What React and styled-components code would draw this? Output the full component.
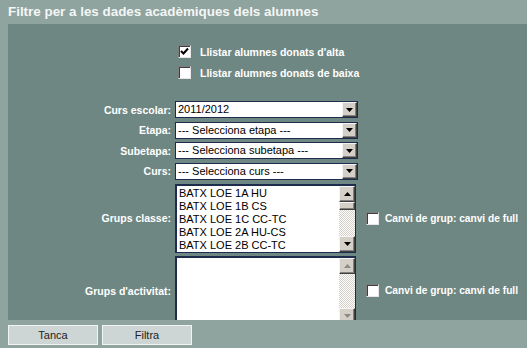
import styled, { createGlobalStyle } from 'styled-components';

const GlobalStyle = createGlobalStyle`
  body {
    margin: 0;
    background: #8fa49f;
    font-family: "Liberation Sans", Arial, sans-serif;
  }
`;

const grups = ['BATX LOE 1A HU', 'BATX LOE 1B CS', 'BATX LOE 1C CC-TC', 'BATX LOE 2A HU-CS', 'BATX LOE 2B CC-TC'];

const selects = [
  { label: 'Curs escolar:', value: '2011/2012' },
  { label: 'Etapa:', value: '--- Selecciona etapa ---' },
  { label: 'Subetapa:', value: '--- Selecciona subetapa ---' },
  { label: 'Curs:', value: '--- Selecciona curs ---' },
];

const Arrow = ({ dir = 'down', disabled }) => (
  <svg width="7" height="4" viewBox="0 0 7 4">
    <path
      d={dir === 'down' ? 'M0 0H7L3.5 4Z' : 'M0 4H7L3.5 0Z'}
      fill={disabled ? '#8a8a8a' : '#000'}
    />
  </svg>
);

const Check = ({ checked }) => (
  <Box>
    {checked && (
      <svg width="9" height="9" viewBox="0 0 9 9">
        <path d="M1 4l2.5 2.5L8 1.5" stroke="#000" strokeWidth="2" fill="none" />
      </svg>
    )}
  </Box>
);

const ListBox = ({ items = [], disabled }) => (
  <List>
    <Items>
      {items.map((i) => (
        <Item key={i}>{i}</Item>
      ))}
    </Items>
    <Scroll>
      <ScrollBtn><Arrow dir="up" disabled={disabled} /></ScrollBtn>
      {!disabled && <Thumb />}
      <Track />
      <ScrollBtn><Arrow disabled={disabled} /></ScrollBtn>
    </Scroll>
  </List>
);

export default function App() {
  return (
    <Page>
      <GlobalStyle />
      <Title>Filtre per a les dades acadèmiques dels alumnes</Title>
      <Panel>
        <Options>
          <CheckRow><Check checked /> Llistar alumnes donats d'alta</CheckRow>
          <CheckRow><Check /> Llistar alumnes donats de baixa</CheckRow>
        </Options>
        <Form>
          {selects.map((s) => (
            <Row key={s.label}>
              <Label>{s.label}</Label>
              <Select>
                <span>{s.value}</span>
                <DropBtn><Arrow /></DropBtn>
              </Select>
            </Row>
          ))}
          <Row $tall>
            <Label>Grups classe:</Label>
            <ListBox items={grups} />
            <CheckRow $side><Check /> Canvi de grup: canvi de full</CheckRow>
          </Row>
          <Row $tall>
            <Label>Grups d'activitat:</Label>
            <ListBox disabled />
            <CheckRow $side><Check /> Canvi de grup: canvi de full</CheckRow>
          </Row>
        </Form>
      </Panel>
      <Footer>
        <Button>Tanca</Button>
        <Button>Filtra</Button>
      </Footer>
    </Page>
  );
}

const Page = styled.div`
  padding-left: 8px;
  width: 519px;
`;

const Title = styled.h1`
  margin: 0;
  height: 24px;
  line-height: 24px;
  font-size: 13.4px;
  font-weight: bold;
  color: #f4f6f5;
`;

const Panel = styled.div`
  background: #6f8782;
  height: 296px;
  overflow: hidden;
`;

const Options = styled.div`
  display: flex;
  flex-direction: column;
  gap: 8px;
  padding: 21px 0 0 170px;
`;

const CheckRow = styled.label`
  display: flex;
  align-items: center;
  gap: ${(p) => (p.$side ? '6px' : '9px')};
  font-size: ${(p) => (p.$side ? '10.2px' : '10.5px')};
  font-weight: bold;
  color: #fff;
  white-space: nowrap;
  margin-left: ${(p) => (p.$side ? '10px' : '0')};
`;

const Box = styled.span`
  width: 11px;
  height: 11px;
  flex: none;
  background: #fff;
  border: 1px solid;
  border-color: #7d7d7d #e6e6e6 #e6e6e6 #7d7d7d;
  box-shadow: inset 1px 1px 0 #404040;
  display: flex;
  align-items: center;
  justify-content: center;
`;

const Form = styled.div`
  display: flex;
  flex-direction: column;
  gap: 3.67px;
  padding-top: 22px;
`;

const Row = styled.div`
  display: flex;
  align-items: center;
  flex: none;
  height: ${(p) => (p.$tall ? '69px' : '17px')};
`;

const Label = styled.div`
  width: 163px;
  flex: none;
  padding-right: 4px;
  text-align: right;
  font-size: 10.5px;
  font-weight: bold;
  color: #fff;
`;

const Select = styled.div`
  width: 179px;
  height: 15px;
  border: 1px solid #1d2b4c;
  background: #fff;
  display: flex;
  align-items: center;
  justify-content: space-between;
  font-size: 11px;
  color: #000;
  padding-left: 2px;
  box-sizing: content-box;
  & > span {
    line-height: 15px;
  }
`;

const btn = `
  background: #d4d0c8;
  border: 1px solid;
  border-color: #f4f4f4 #404040 #404040 #f4f4f4;
  box-shadow: inset -1px -1px 0 #808080;
  box-sizing: border-box;
  display: flex;
  align-items: center;
  justify-content: center;
`;

const DropBtn = styled.div`
  ${btn}
  width: 15px;
  height: 15px;
`;

const List = styled.div`
  width: 181px;
  height: 69px;
  flex: none;
  box-sizing: border-box;
  border: 1px solid #1d2b4c;
  border-top-width: 2px;
  border-left-width: 2px;
  background: #fff;
  display: flex;
  overflow: hidden;
`;

const Items = styled.div`
  flex: 1;
  padding: 1px 0 0 2px;
`;

const Item = styled.div`
  font-size: 11px;
  line-height: 13px;
  height: 13px;
  color: #000;
  white-space: nowrap;
`;

const Scroll = styled.div`
  width: 16px;
  display: flex;
  flex-direction: column;
`;

const ScrollBtn = styled.div`
  ${btn}
  width: 16px;
  height: 16px;
  flex: none;
`;

const Thumb = styled.div`
  ${btn}
  width: 16px;
  height: 8px;
  flex: none;
`;

const Track = styled.div`
  flex: 1;
  background-color: #fff;
  background-image: repeating-conic-gradient(#d4d0c8 0 25%, #fff 0 50%);
  background-size: 2px 2px;
`;

const Footer = styled.div`
  display: flex;
  gap: 4px;
  padding-top: 5px;
`;

const Button = styled.button`
  width: 90px;
  height: 20px;
  background: #cdd6d5;
  border: 1px solid #f2f5f4;
  font-family: "Liberation Sans", Arial, sans-serif;
  font-size: 11px;
  color: #222;
  padding: 0;
`;
